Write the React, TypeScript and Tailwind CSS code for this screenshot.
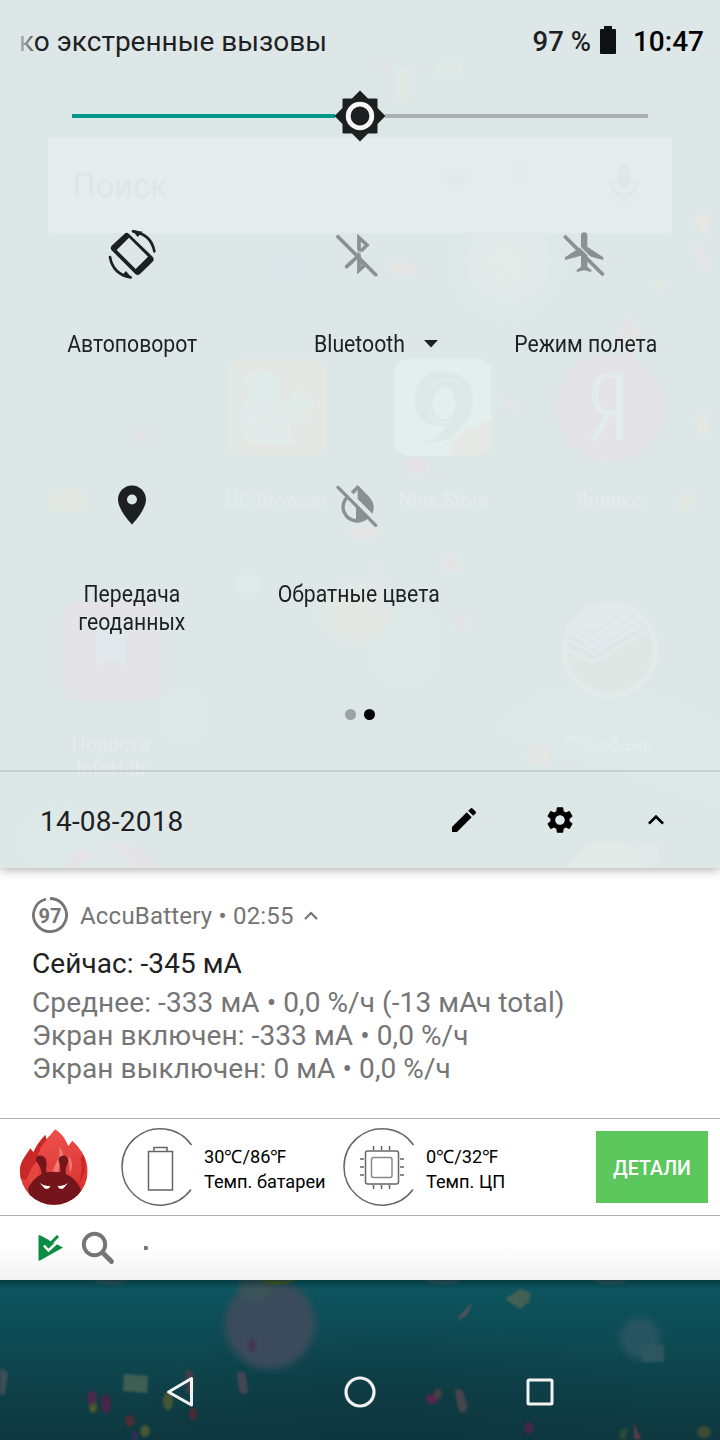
import type { ReactNode } from 'react';
import { MdEdit, MdSettings, MdKeyboardArrowUp } from 'react-icons/md';

const ghostLabels = [
  { text: 'Поиск', className: 'left-[69px] top-[167px] text-[35px] leading-[40px] text-[#dce7e6]' },
  { text: 'UC Browser', className: 'left-[217px] w-[120px] top-[488px] text-center text-[21px] leading-[24px] text-[#e4ecec]' },
  { text: 'Nine Store', className: 'left-[384px] w-[120px] top-[488px] text-center text-[21px] leading-[24px] text-[#e4ecec]' },
  { text: 'Яндекс', className: 'left-[549px] w-[120px] top-[488px] text-center text-[21px] leading-[24px] text-[#e4ecec]' },
  { text: 'Новости InfoHub', className: 'left-[61px] w-[100px] top-[732px] text-center text-[21px] leading-[24px] text-[#e4ecec]' },
  { text: 'Сбербанк', className: 'left-[549px] w-[120px] top-[732px] text-center text-[21px] leading-[24px] text-[#e4ecec]' },
];

function LauncherGhost() {
  return (
    <div className="absolute inset-0 overflow-hidden">
      <svg width="720" height="868" viewBox="0 0 720 868" className="absolute inset-0">
        <defs>
          <filter id="soft"><feGaussianBlur stdDeviation="4" /></filter>
          <filter id="slight"><feGaussianBlur stdDeviation="1" /></filter>
          <radialGradient id="glow">
            <stop offset="0" stopColor="#e5ebe9" />
            <stop offset="0.6" stopColor="#e0eae8" />
            <stop offset="1" stopColor="#dee7e9" stopOpacity="0" />
          </radialGradient>
        </defs>
        <circle cx="508" cy="263" r="62" fill="url(#glow)" />
        <g filter="url(#soft)" fill="#dce9e8">
          <ellipse cx="405" cy="645" rx="32" ry="40" />
          <ellipse cx="185" cy="716" rx="18" ry="24" />
          <path d="M500 730Q530 690 610 690Q680 700 720 730V800Q620 770 500 730Z" />
          <ellipse cx="60" cy="840" rx="40" ry="30" />
          <ellipse cx="358" cy="613" rx="34" ry="30" fill="#e3e8e5" />
        </g>
        <g filter="url(#slight)">
          <path d="M395 69h14l-2 32h-10z" fill="#e2e9e4" />
          <path d="M436 64h25v10h-25z" fill="#e0eae4" />
          <path d="M384 58l4 10-3 18z" fill="#e5e1e6" />
          <path d="M695 420l9-10 7 20-10 4z" fill="#e4e8e4" />
          <path d="M694 223q7-16 16-5l-4 16z" fill="#e7e8e4" />
          <path d="M693 246l6-4 10 22-5 10z" fill="#e4e4e8" />
          <path d="M388 261l26 5v10l-22-4z" fill="#e5e5e4" />
          <path d="M655 283l12-2-6 10z" fill="#e4eae1" />
          <path d="M623 325l6-14 12 28-11 24-14-19z" fill="#e4e4e5" />
          <path d="M50 490h34v21h-34z" fill="#e2e8e1" />
          <path d="M676 508l9-17 8 4-3 16z" fill="#e2e8e1" />
          <path d="M350 527l28 5-5 8-23-4z" fill="#e5e5e3" />
          <path d="M237 577h22v14h-22z" fill="#e1ebea" />
          <path d="M443 557l13-3 2 16-13 2z" fill="#e5e4e4" />
          <path d="M455 606q12 11 10 23-10 6-12-8z" fill="#e4e3e5" />
          <path d="M374 558l11 24 4 35-12-4z" fill="#e2e6e7" />
          <path d="M530 744l22 5-4 18-20-6z" fill="#e5e7e4" />
          <path d="M408 460h19v12h-18z" fill="#e5e1e6" />
          <path d="M132 437l14-10-3 11-9 4z" fill="#e4e2e6" />
          <path d="M500 398l17 5 4 9-13-3z" fill="#e2e5e5" />
          <circle cx="290" cy="269" r="17" fill="#dde6e8" />
        </g>
        <rect x="48" y="137" width="624" height="96" rx="4" fill="#e4edeb" />
        <g filter="url(#slight)" fill="#e3eaeb">
          <ellipse cx="456" cy="178" rx="15" ry="9" />
          <ellipse cx="520" cy="172" rx="6" ry="11" />
        </g>
        <g fill="#dde8e7">
          <rect x="618" y="165" width="12" height="24" rx="6" />
          <path d="M611 181q1 14 13 14t13-14M624 195v9" fill="none" stroke="#dde8e7" strokeWidth="3" />
        </g>

        <g transform="translate(0,220) scale(.4592,.3333)">
          <rect x="497" y="415" width="214" height="293" rx="40" fill="#e4e8e4" />
          <path
            d="M528 490C535 440 608 435 610 500C610 550 585 560 580 590Q600 550 630 542L648 492Q656 525 675 535Q690 550 680 570L650 562Q660 585 680 598L640 606Q600 570 590 572Q635 580 636 652L654 668H545C525 650 520 590 530 555C545 520 568 505 528 490Z"
            fill="#e1ecea"
          />
          <path d="M552 655C535 575 620 575 620 655M575 635a12 17 0 1 0 24 0a12 17 0 1 0-24 0M585 561Q635 560 650 600" fill="none" stroke="#e4e8e4" strokeWidth="7" />
          <rect x="858" y="415" width="213" height="293" rx="40" fill="#e4eeec" />
          <path d="M975 708C1000 650 990 638 1071 600V668Q1068 706 1032 708Z" fill="#e5e8e5" />
          <path
            fillRule="evenodd"
            d="M963 453C1045 455 1045 570 1000 630Q975 675 920 665Q960 655 970 620L935 612Q900 590 903 530Q910 455 963 453ZM968 500C935 510 930 590 968 600C1000 590 1000 510 968 500Z"
            fill="#dce9e7"
          />
          <path d="M943 495Q985 460 1010 500M932 565Q945 625 985 602" fill="none" stroke="#e4eeec" strokeWidth="4" />
          <ellipse cx="1328" cy="563" rx="117" ry="161" fill="#e4e4e6" />
          <path d="M1349 463V660M1349 465H1330Q1294 465 1296 525Q1296 576 1330 578H1349M1326 580L1293 660" fill="none" stroke="#e2eceb" strokeWidth="13" />
        </g>
        <rect x="63" y="602" width="97" height="98" rx="15" fill="#e4e4e6" />
        <path d="M96 620h29v48l-15-10-14 10z" fill="#e2e9ec" />
        <circle cx="610" cy="650" r="45.500" fill="#dfe7e5" stroke="#e4eaeb" strokeWidth="6" />
        <path d="M572 630Q590 604 610 607Q632 608 642 626L593 656Z" fill="#e4e9eb" />
        <path d="M575 625L593 636L628 613M570 632L593 644L637 618M568 640L593 653L643 624M568 649L593 662L647 631" fill="none" stroke="#e3e9ec" strokeWidth="4" />
        <path d="M577 624L593 634L628 610M573 630L593 642L636 614M570 637L593 650L641 621" fill="none" stroke="#dde6e8" strokeWidth="2" />
        <circle cx="110" cy="892" r="52" fill="#e1e8e8" />
        <path d="M68 862q4-12 20-12l4 8-10 4v6H66zM120 843q24 2 38 25h-24q-4-12-16-17z" fill="#e5e3e5" />
        <circle cx="610" cy="890" r="49" fill="#e3eae8" />
        <circle cx="648" cy="855" r="12" fill="#e1e9e9" />
      </svg>
      {ghostLabels.map((label) => (
        <span key={label.text} className={`absolute ${label.className}`}>
          <span className="inline-block scale-x-[0.93]">{label.text}</span>
        </span>
      ))}
    </div>
  );
}

function RotateIcon() {
  return (
    <svg width="60" height="60" viewBox="0 0 180 180" fill="#1d2021">
      <path fillRule="evenodd" d="M67 27Q74 20 81 27L152 95Q158 103 152 110L114 147Q107 153 100 147L29 76Q23 69 29 62ZM81 38L44 75L101 132L138 95Z" />
      <path d="M93 19Q148 28 157 79M24 96Q33 148 86 157" fill="none" stroke="#1d2021" strokeWidth="8" strokeLinecap="round" />
      <path d="M90 15L122 20L107 36ZM90 160L58 153L72 138Z" />
    </svg>
  );
}

function BluetoothOffIcon() {
  return (
    <svg width="60" height="60" viewBox="-3 0 180 180" fill="none" stroke="#8b9192" strokeWidth="11">
      <path d="M87 80V38L111 60L93 78M87 82V136L103 121L90 106" />
      <path d="M83 94L50 125M24 35L137 149" strokeLinecap="round" />
      <path d="M34 29L147 142" stroke="#dee7e8" strokeWidth="3" />
    </svg>
  );
}

function AirplaneOffIcon() {
  return (
    <svg width="60" height="60" viewBox="3 0 180 180" fill="#8b9192">
      <path d="M78 32Q78 22 88 22Q97 22 97 32V65L145 97V105L97 92V125L109 135V141L88 136L65 141V135L78 125V92L30 105V97L62 76L78 65Z" />
      <path d="M31 36L142 147" stroke="#8b9192" strokeWidth="11" strokeLinecap="round" />
      <path d="M40 31L151 142" stroke="#dee7e8" strokeWidth="4" />
    </svg>
  );
}

function LocationIcon() {
  return (
    <svg width="60" height="60" viewBox="0 0 60 60" fill="#1d2021">
      <path fillRule="evenodd" d="M30 10.500C22.270 10.500 16 16.770 16 24.500C16 35 30 49.500 30 49.500S44 35 44 24.500C44 16.770 37.730 10.500 30 10.500ZM30 19.500A5 5 0 1 1 30 29.500A5 5 0 1 1 30 19.500Z" />
    </svg>
  );
}

function InvertOffIcon() {
  return (
    <svg width="60" height="60" viewBox="-3 0 180 180" fill="none" stroke="#8b9192" strokeWidth="10">
      <path d="M83 30L116 64Q139 89 127 116L83 72V45L71 58L62 50Z" fill="#8b9192" stroke="none" />
      <path d="M50 68C26 98 46 138 83 138" />
      <path d="M78 85L117 127Q102 143 83 143H78Z" fill="#8b9192" stroke="none" />
      <path d="M33 29L147 143" stroke="#dee7e8" strokeWidth="4" />
      <path d="M24 37L137 151" strokeLinecap="round" />
    </svg>
  );
}

function Tile({ icon, label, arrow }: { icon: ReactNode; label: string; arrow?: boolean }) {
  return (
    <div className="flex h-[250px] w-[227px] flex-col items-center">
      {icon}
      <div className="mt-[45px] flex items-center justify-center">
        <span className="flex w-[140px] justify-center text-center text-[24.5px] leading-[28px] text-[#1e2122]">
          <span className="inline-block shrink-0 scale-x-[0.865] whitespace-pre-line">{label}</span>
        </span>
        {arrow && (
          <svg width="14" height="8" viewBox="0 0 14 8" className="relative -left-[5px] -mr-[14px]" fill="#1e2122">
            <path d="M0 0h14L7 7.500z" />
          </svg>
        )}
      </div>
    </div>
  );
}

function QuickSettings() {
  return (
    <section className="relative z-10 h-[868px] shrink-0 bg-[#dee7e8] shadow-[0_1px_11px_rgba(0,0,0,0.36)]">
      <LauncherGhost />
      <div className="relative flex h-full flex-col">
        <div className="flex h-[82px] items-center justify-between pl-[19px] pr-[16px] pt-[2px] text-[28px] text-[#1e2122]">
          <span>
            <span className="bg-gradient-to-r from-[#b4bbbc] to-[#5e6465] bg-clip-text text-transparent">к</span>о экстренные вызовы
          </span>
          <div className="flex items-center">
            <span className="text-[27.5px] font-medium">97 %</span>
            <svg width="16" height="28" viewBox="0 0 16 28" className="mb-[5px] ml-[9px] mr-[17px]" fill="#0f1213">
              <path d="M4 0h8v3h3a1 1 0 0 1 1 1v23a1 1 0 0 1-1 1H1a1 1 0 0 1-1-1V4a1 1 0 0 1 1-1h3z" />
            </svg>
            <span className="font-medium text-black">10:47</span>
          </div>
        </div>

        <div className="flex h-[68px] items-center px-[72px]">
          <div className="h-1 w-[263px] bg-[#009688]" />
          <svg width="52" height="52" viewBox="0 0 52 52" className="-mx-[1px] shrink-0">
            <path
              d="M26 .5L34 8.500H42.500Q43.500 8.500 43.500 9.500V18L51.500 26L43.500 34V42.500Q43.500 43.500 42.500 43.500H34L26 51.500L18 43.500H9.500Q8.500 43.500 8.500 42.500V34L.5 26L8.500 18V9.500Q8.500 8.500 9.500 8.500H18Z"
              fill="#1d2021"
            />
            <circle cx="26" cy="26" r="11.800" fill="none" stroke="#f7f7f7" strokeWidth="4.800" />
          </svg>
          <div className="h-1 flex-1 bg-[#a9b1b2]" />
        </div>

        <div className="mt-[75px] flex h-[479px] flex-wrap content-start pl-[18.5px]">
          <Tile icon={<RotateIcon />} label="Автоповорот" />
          <Tile icon={<BluetoothOffIcon />} label="Bluetooth" arrow />
          <Tile icon={<AirplaneOffIcon />} label="Режим полета" />
          <Tile icon={<LocationIcon />} label={'Передача\nгеоданных'} />
          <Tile icon={<InvertOffIcon />} label="Обратные цвета" />
        </div>

        <div className="flex h-[20px] items-center justify-center gap-2">
          <div className="size-[11px] rounded-full bg-[#9ba3a4]" />
          <div className="size-[11px] rounded-full bg-black" />
        </div>

        <div className="mt-auto flex h-[98px] items-center border-t-2 border-[#c8d1d2] pl-[40px] pr-[48px]">
          <span className="flex-1 pt-[3px] text-[28px] tracking-[0.22px] text-[#1e2122]">14-08-2018</span>
          <div className="flex items-center gap-[64px] text-[32px] text-black">
            <MdEdit />
            <MdSettings />
            <MdKeyboardArrowUp />
          </div>
        </div>
      </div>
    </section>
  );
}

function AccuBattery() {
  return (
    <section className="h-[250px] shrink-0 pl-[32px] pt-[29px]">
      <div className="flex h-[36px] items-center text-[24px] text-[#757575]">
        <div className="relative mr-[12px] size-[36px]">
          <svg width="36" height="36" viewBox="0 0 36 36">
            <path d="M18 1.500A16.500 16.500 0 1 1 14 2" fill="none" stroke="#757575" strokeWidth="2.800" />
          </svg>
          <span className="absolute inset-0 flex items-center justify-center pt-px text-[20px] font-bold">97</span>
        </div>
        <span className="pt-[2px] tracking-[0.2px]">AccuBattery • 02:55</span>
        <svg width="14" height="9" viewBox="0 0 14 9" className="ml-[10px]" fill="none" stroke="#757575" strokeWidth="2.200">
          <path d="M1 8L7 2l6 6" />
        </svg>
      </div>
      <p className="mt-[14px] text-[28px] leading-[33px] tracking-[0.06px] text-[#212121]">Сейчас: -345 мА</p>
      <div className="mt-[6px] text-[28px] leading-[33px] tracking-[0.09px] text-[#757575]">
        <p>Среднее: -333 мА • 0,0 %/ч (-13 мАч total)</p>
        <p>Экран включен: -333 мА • 0,0 %/ч</p>
        <p>Экран выключен: 0 мА • 0,0 %/ч</p>
      </div>
    </section>
  );
}

function AntutuLogo() {
  return (
    <svg width="90" height="90" viewBox="0 0 270 270" className="shrink-0">
      <defs>
        <linearGradient id="flame" x1="0" y1="0" x2="0.3" y2="1">
          <stop offset="0" stopColor="#f35a55" />
          <stop offset="1" stopColor="#d8302f" />
        </linearGradient>
        <clipPath id="disc">
          <path d="M30 153C30 125 45 112 61 85L70 97Q80 72 106 44L109 57Q120 48 135 28Q160 42 175 78L187 62Q212 86 221 106Q233 130 233 153A101.500 101.500 0 0 1 30 153Z" />
        </clipPath>
      </defs>
      <g clipPath="url(#disc)">
        <rect width="270" height="270" fill="url(#flame)" />
        <path d="M61 85L70 97Q80 72 106 44L110 61Q85 84 82 120Q66 145 47 180L30 176V120ZM220 103Q235 140 214 182Q203 190 200 208Q222 150 211 117Z" fill="#ca2826" />
        <path d="M84 125Q46 150 62 195L85 190Z" fill="#e64540" />
        <path d="M126 157L148 107Q151 130 145 157ZM175 108Q195 125 180 162Z" fill="#ef7b75" />
        <path d="M148 80Q168 107 159 130Q150 126 148 106Z" fill="#ef7b75" />
        <path d="M78 122C75 103 101 101 108 119C113 137 105 150 110 157Q132 153 150 157Q155 145 145 119C150 101 178 102 174 125Q164 147 168 163Q200 176 213 210L200 260H66L54 206Q66 178 94 163Q96 145 78 122Z" fill="#74151b" />
      </g>
      <path d="M89 189Q105 201 121 197Q117 209 105 206ZM174 189Q158 201 143 197Q147 209 159 206Z" fill="#fff" />
    </svg>
  );
}

function OpenRing({ children }: { children: ReactNode }) {
  return (
    <svg width="74" height="80" viewBox="0 0 74 80" fill="none" stroke="#666" strokeWidth="1.500" className="shrink-0">
      <path d="M71.500 18A38.200 38.200 0 1 0 71 62.500" />
      {children}
    </svg>
  );
}

function Antutu() {
  return (
    <section className="flex h-[98px] shrink-0 items-center border-y border-[#b0b0b0] text-[18.2px] leading-[25px] text-black">
      <div className="-mt-[4px] ml-[10px]"><AntutuLogo /></div>
      <div className="ml-[20px] flex items-center">
        <OpenRing>
          <path d="M28.500 24.500h24v38.500h-24zM34 24v-3.500h13v3.500" />
        </OpenRing>
        <div className="ml-[10px] w-[138px] whitespace-nowrap pt-[4px]">
          <p>30℃/86℉</p>
          <p>Темп. батареи</p>
        </div>
        <OpenRing>
          <rect x="23.500" y="24" width="33" height="33" rx="2" />
          <rect x="29.500" y="30.500" width="20.500" height="20" rx="2" stroke="#888" />
          <path d="M31.500 23v-4M39.500 23v-4M47.500 23v-4M31.500 58v4M39.500 58v4M47.500 58v4M22 32h-4M22 40h-4M22 48h-4M58 32h4M58 40h4M58 48h4" />
        </OpenRing>
        <div className="ml-[10px] whitespace-nowrap pt-[4px]">
          <p>0℃/32℉</p>
          <p>Темп. ЦП</p>
        </div>
      </div>
      <div className="ml-auto mr-[12px] flex h-[72px] w-[112px] items-center justify-center bg-[#5cc75d] pt-[2px] text-[19.6px] font-medium text-white">
        ДЕТАЛИ
      </div>
    </section>
  );
}

function OverflowIcons() {
  return (
    <section className="flex h-[64px] shrink-0 items-center bg-gradient-to-b from-white from-45% to-[#f2f2f2]">
      <svg width="160" height="64" viewBox="0 0 160 64">
        <path d="M39.500 19L63 31.500L40 44.500Q38.500 45 38.500 43.500V19.500Z" fill="#0b8c45" />
        <path d="M51 26L58.500 18.500" stroke="#fff" strokeWidth="5" />
        <path d="M49 29L58 20" stroke="#0b8c45" strokeWidth="3" />
        <path d="M44 29.500L48.500 34.500L57 26.500" fill="none" stroke="#fff" strokeWidth="2.600" />
        <circle cx="94.500" cy="28.500" r="10.700" fill="none" stroke="#757575" strokeWidth="3.900" />
        <path d="M102.500 36.500L111.500 45.500" stroke="#757575" strokeWidth="4.800" strokeLinecap="round" />
        <path d="M144 30h3l1 1v2l-1 1h-3z" fill="#757575" />
      </svg>
    </section>
  );
}

function NavigationBar() {
  return (
    <nav className="relative h-[160px] shrink-0 overflow-hidden bg-gradient-to-b from-[#0c5660] to-[#0e373e]">
      <svg width="720" height="160" viewBox="0 0 720 160" className="absolute inset-0">
        <defs>
          <filter id="blurry" x="-20%" y="-20%" width="140%" height="140%"><feGaussianBlur stdDeviation="3.500" /></filter>
          <filter id="confetti"><feGaussianBlur stdDeviation="1" /></filter>
          <radialGradient id="shade">
            <stop offset="0" stopColor="#0d3038" stopOpacity="0.350" />
            <stop offset="1" stopColor="#0d3038" stopOpacity="0" />
          </radialGradient>
          <linearGradient id="edge" x1="0" y1="0" x2="0" y2="1">
            <stop offset="0" stopColor="#03282e" stopOpacity="0.600" />
            <stop offset="1" stopColor="#03282e" stopOpacity="0" />
          </linearGradient>
        </defs>
        <ellipse cx="390" cy="135" rx="270" ry="100" fill="url(#shade)" />
        <g filter="url(#blurry)">
          <circle cx="270" cy="44" r="45" fill="#3a4b5b" />
          <ellipse cx="640" cy="58" rx="20" ry="21" fill="#265460" />
          <ellipse cx="255" cy="7" rx="17" ry="14" fill="#3a5559" />
        </g>
        <g filter="url(#confetti)">
          <path d="M505 19L520 9L531 13L529 22L520 29Z" fill="#426053" />
          <path d="M458 38L472 22L468 34L460 40Z" fill="#525258" />
          <path d="M642 65h22v17h-22z" fill="#2d5660" />
          <path d="M124 94l24 2-1 17-24-2z" fill="#405e53" />
          <path d="M0 89q8 0 8 7l-4 19H0z" fill="#3e5056" />
          <path d="M237 93q8-4 9 4l2 14q-4 7-9-1z" fill="#434752" />
          <ellipse cx="252" cy="65" rx="4" ry="7" fill="#433955" />
          <ellipse cx="93" cy="127" rx="4" ry="6" fill="#4d5632" />
          <ellipse cx="92" cy="118" rx="5" ry="7" fill="#4c2c4c" />
          <ellipse cx="106" cy="124" rx="5" ry="10" fill="#46264a" />
          <ellipse cx="168" cy="121" rx="5" ry="9" fill="#445635" />
          <path d="M185 90q8-2 9 8l-1 16-7-1z" fill="#403d48" />
          <ellipse cx="130" cy="141" rx="5" ry="6" fill="#482d35" />
          <ellipse cx="145" cy="151" rx="5" ry="6" fill="#445635" />
          <ellipse cx="193" cy="134" rx="4" ry="6" fill="#462c35" />
          <path d="M133 150l5 2-1 8h-5z" fill="#302e5b" />
          <ellipse cx="432" cy="119" rx="6" ry="5" fill="#56274d" />
          <ellipse cx="438" cy="114" rx="4" ry="5" fill="#453f42" />
          <path d="M455 110q5-4 8 2l5 15-4 6q-6-1-7-8z" fill="#44454b" />
          <ellipse cx="529" cy="148" rx="5" ry="6" fill="#44284a" />
          <path d="M634 143l7 16h-7z" fill="#5a3c44" />
          <path d="M619 151l9-4-2 12h-6z" fill="#2a4a30" />
          <ellipse cx="704" cy="152" rx="7" ry="6" fill="#3d4c36" />
        </g>
        <g fill="#345b61">
          <ellipse cx="111" cy="-10" rx="26" ry="15" />
          <ellipse cx="277" cy="-10" rx="26" ry="15" fill="#52601c" />
          <ellipse cx="443" cy="-10" rx="26" ry="15" />
          <ellipse cx="610" cy="-10" rx="26" ry="15" />
        </g>
        <rect width="720" height="9" fill="url(#edge)" />
      </svg>
      <div className="relative flex h-full items-center justify-center gap-[140px] pt-[64px]">
        <svg width="40" height="40" viewBox="0 0 40 40" fill="none" stroke="#f2f2f2" strokeWidth="3">
          <path d="M31.500 6.500V33L8.500 20Z" strokeLinejoin="round" />
        </svg>
        <svg width="40" height="40" viewBox="0 0 40 40" fill="none" stroke="#f2f2f2" strokeWidth="3.200">
          <circle cx="20" cy="20" r="14" />
        </svg>
        <svg width="40" height="40" viewBox="0 0 40 40" fill="none" stroke="#f2f2f2" strokeWidth="3">
          <rect x="8" y="8" width="24" height="24" rx="1" />
        </svg>
      </div>
    </nav>
  );
}

export default function App() {
  return (
    <div className="flex h-[1440px] w-[720px] flex-col overflow-hidden bg-white font-['Roboto',sans-serif]">
      <QuickSettings />
      <AccuBattery />
      <Antutu />
      <OverflowIcons />
      <NavigationBar />
    </div>
  );
}
